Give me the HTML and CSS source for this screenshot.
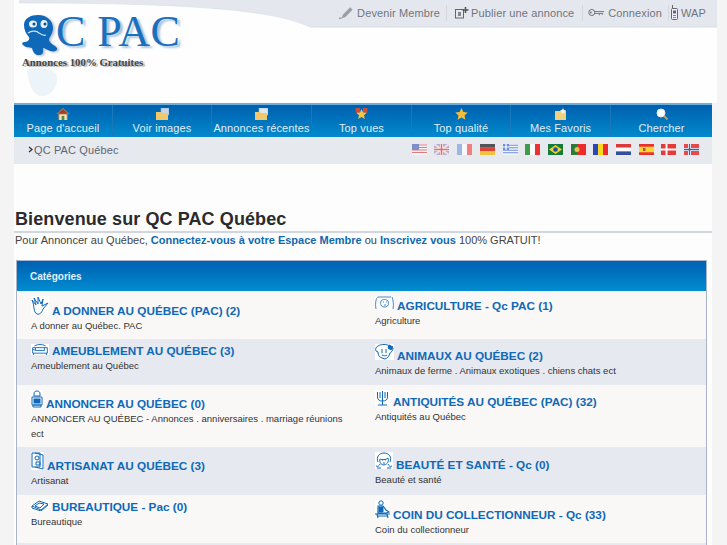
FILE: index.html
```html
<!DOCTYPE html>
<html lang="fr">
<head>
<meta charset="utf-8">
<title>QC PAC Québec</title>
<link rel="stylesheet" href="styles.css">
</head>
<body>
<div class="page">
  <header class="header">
    <svg class="swoosh" width="698" height="28" viewBox="0 0 698 28" aria-hidden="true">
      <path d="M0 0H698V27H291C260 13 200 3 0 3Z" fill="#e4e8ee"/>
      <path d="M291 27H698" stroke="#d4dbe6" fill="none"/>
      <path d="M0 3C200 3 260 13 291 27" stroke="#d4dbe6" fill="none" opacity=".5"/>
    </svg>
    <nav class="toplinks">
      <a class="toplink toplink-first"><svg width="15" height="13" viewBox="0 0 16 13"><path d="M4 9L12 1l2.500 2.500-8 8L3 12.500Z" fill="#9a9ea6"/><path d="M0 12.500h3" stroke="#777"/></svg>Devenir Membre</a>
      <a class="toplink toplink-publish"><svg width="14" height="12" viewBox="0 0 14 12"><rect x=".5" y="2.500" width="8" height="8.500" fill="none" stroke="#666"/><path d="M3 5h3v4H3z" fill="#888"/><path d="M10.500 0v6M7.500 3h6" stroke="#555" stroke-width="1.600"/></svg>Publier une annonce</a>
      <a class="toplink toplink-login"><svg width="17" height="9" viewBox="0 0 18 9"><circle cx="4" cy="4.500" r="3.200" fill="none" stroke="#666"/><path d="M7 3.500h10M7 5.500h9M12 5.500v2M15 5.500v1.500" stroke="#777"/><circle cx="3" cy="4.500" r="1" fill="#777"/></svg>Connexion</a>
      <a class="toplink toplink-last"><svg width="7" height="15" viewBox="0 0 7 15"><rect x=".5" y="3.500" width="6" height="11" rx="1" fill="#eef" stroke="#666"/><rect x="2" y="5.500" width="3" height="3" fill="#666"/><path d="M1.500 3.500V0" stroke="#666"/><path d="M2 10.500h3M2 12.500h3" stroke="#888"/></svg>WAP</a>
    </nav>
    <div class="logo">
      <div class="logo-mark">
        <svg class="mascot" width="36" height="41" viewBox="0 0 36 41">
          <path d="M2 10C2 3 9 0 16 0C25 0 31 6 31 13C31 19 27 22 27 25C28 29 33 30 35 33C36 36 32 37 28 36C25 35 23 33 21 33C21 36 22 39 18 40C13 41 11 37 10 33C7 32 4 33 1 30C-1 28 1 27 3 27C6 26 8 25 7 22C4 19 2 15 2 10Z" fill="#0f69b8"/>
          <ellipse cx="11" cy="9" rx="4" ry="3.500" fill="#e8f2fa"/>
          <ellipse cx="22" cy="9" rx="3.500" ry="4" fill="#e8f2fa"/>
          <circle cx="12" cy="9" r="1.500" fill="#0a4f90"/>
          <circle cx="23" cy="9" r="1.500" fill="#0a4f90"/>
          <path d="M6 18c4-3 9-2 11 0 3 2 5 3 7 2" stroke="#cfe3f3" fill="none" stroke-width="1.200"/>
        </svg>
        <span class="logo-name">C PAC</span>
      </div>
      <div class="logo-tag">Annonces 100% Gratuites</div>
      <svg class="reflection" width="36" height="30" viewBox="0 0 36 30"><path d="M3 2C8 0 14 0 20 1c8 0 14 3 13 12-1 8-7 14-13 15C12 30 5 22 3 2Z" fill="#dbe9f4" opacity=".5"/></svg>
    </div>
  </header>

  <nav class="mainnav">
    <a class="navitem"><svg width="14" height="13" viewBox="0 0 14 13"><path d="M7 0L0 6.500h2V13h10V6.500h2Z" fill="#b8894a"/><path d="M7 1L1.500 6.200h11Z" fill="#a33c2a"/><rect x="3" y="7" width="8" height="6" fill="#f4e6c8"/><rect x="5.500" y="8.500" width="3" height="4.500" fill="#5a8a3a"/></svg><span>Page d'accueil</span></a>
    <a class="navitem"><svg width="13" height="12" viewBox="0 0 13 12"><rect x="5" y="0" width="8" height="7" fill="#c6d6e8" stroke="#8fb0d0" stroke-width=".6"/><path d="M0 4h5l1 1h6v7H0Z" fill="#f1c96a"/></svg><span>Voir images</span></a>
    <a class="navitem"><svg width="13" height="12" viewBox="0 0 13 12"><rect x="4" y="0" width="9" height="7" fill="#dfe7f0" stroke="#9db6cf" stroke-width=".6"/><path d="M0 4h5l1 1h6v7H0Z" fill="#f1c96a"/></svg><span>Annonces récentes</span></a>
    <a class="navitem"><svg width="13" height="13" viewBox="0 0 13 13"><rect x="0" y="0" width="5" height="5" fill="#d24a35"/><rect x="8" y="0" width="5" height="5" fill="#d24a35"/><path d="M6.500 1l1.700 3.800 4 .4-3 2.700.9 4-3.600-2.100-3.600 2.100.9-4-3-2.700 4-.4Z" fill="#f6c247"/></svg><span>Top vues</span></a>
    <a class="navitem"><svg width="13" height="12" viewBox="0 0 13 12"><path d="M6.500 0l1.900 4 4.300.5-3.200 3 .9 4.300-3.900-2.200-3.900 2.200.9-4.300-3.200-3L4.600 4Z" fill="#f4bd3a"/></svg><span>Top qualité</span></a>
    <a class="navitem"><svg width="12" height="12" viewBox="0 0 12 12"><rect x="0" y="3" width="11" height="9" fill="#f0d184"/><path d="M8 0l1 2 2 .3-1.500 1.400.4 2.100L8 4.800l-1.900 1 .4-2.100L5 2.300 7 2Z" fill="#f8f2d8"/></svg><span>Mes Favoris</span></a>
    <a class="navitem"><svg width="12" height="12" viewBox="0 0 12 12"><circle cx="5" cy="5" r="4" fill="#fff" stroke="#e3e7ee"/><path d="M8 8l3.500 3.500" stroke="#c69a4e" stroke-width="2"/></svg><span>Chercher</span></a>
  </nav>

  <div class="crumbbar">
    <div class="crumb"><svg class="crumb-mark" width="5" height="7" viewBox="0 0 5 7"><path d="M1 1l3 2.500L1 6" fill="none" stroke="#333" stroke-width="1.300"/></svg>QC PAC Québec</div>
    <div class="flags">
      <svg class="flag" viewBox="0 0 15 11"><rect width="15" height="11" fill="#f5f5f5"/><path d="M0 1h15M0 3.500h15M0 6h15M0 8.500h15" stroke="#e27a82" stroke-width="1.200"/><rect width="7" height="6" fill="#7f8fca"/></svg>
      <svg class="flag" viewBox="0 0 15 11"><rect width="15" height="11" fill="#a9b3db"/><path d="M0 0L15 11M15 0L0 11" stroke="#f6dfe0" stroke-width="2"/><path d="M7.500 0v11M0 5.500h15" stroke="#f4f4f4" stroke-width="3"/><path d="M7.500 0v11M0 5.500h15" stroke="#ea6a72" stroke-width="1.500"/></svg>
      <svg class="flag" viewBox="0 0 15 11"><rect width="5" height="11" fill="#9db7e4"/><rect x="5" width="5" height="11" fill="#f8f8fb"/><rect x="10" width="5" height="11" fill="#f27f7f"/></svg>
      <svg class="flag" viewBox="0 0 15 11"><rect width="15" height="3.700" fill="#555"/><rect y="3.700" width="15" height="3.700" fill="#d8443a"/><rect y="7.400" width="15" height="3.600" fill="#eec43c"/></svg>
      <svg class="flag" viewBox="0 0 15 11"><rect width="15" height="11" fill="#f2f5fb"/><path d="M0 1.200h15M0 3.700h15M0 6.200h15M0 8.700h15" stroke="#6f8fd8" stroke-width="1.100"/><rect width="6" height="6" fill="#6f8fd8"/><path d="M3 0v6M0 3h6" stroke="#fff" stroke-width="1.200"/></svg>
      <svg class="flag" viewBox="0 0 15 11"><rect width="5" height="11" fill="#3f9b4a"/><rect x="5" width="5" height="11" fill="#fafafa"/><rect x="10" width="5" height="11" fill="#ee3030"/></svg>
      <svg class="flag" viewBox="0 0 15 11"><rect width="15" height="11" fill="#157a3a"/><path d="M7.500 1L14 5.500 7.500 10 1 5.500Z" fill="#f2d230"/><circle cx="7.500" cy="5.500" r="2.300" fill="#2a4d9c"/></svg>
      <svg class="flag" viewBox="0 0 15 11"><rect width="6" height="11" fill="#2d7a3a"/><rect x="6" width="9" height="11" fill="#ee2a2a"/><circle cx="6" cy="5.500" r="2.500" fill="#e6c24a"/></svg>
      <svg class="flag" viewBox="0 0 15 11"><rect width="5" height="11" fill="#2a48b8"/><rect x="5" width="5" height="11" fill="#f7d820"/><rect x="10" width="5" height="11" fill="#ee2a2a"/></svg>
      <svg class="flag" viewBox="0 0 15 11"><rect width="15" height="3.700" fill="#d93a3a"/><rect y="3.700" width="15" height="3.700" fill="#fafafa"/><rect y="7.400" width="15" height="3.600" fill="#344f9e"/></svg>
      <svg class="flag" viewBox="0 0 15 11"><rect width="15" height="11" fill="#ec3030"/><rect y="2.700" width="15" height="5.600" fill="#f6d830"/><rect x="4" y="4" width="2.500" height="3" fill="#b4552a"/></svg>
      <svg class="flag" viewBox="0 0 15 11"><rect width="15" height="11" fill="#e63a3a"/><path d="M5.500 0v11M0 5.500h15" stroke="#fafafa" stroke-width="2"/></svg>
      <svg class="flag" viewBox="0 0 15 11"><rect width="15" height="11" fill="#e84a4a"/><path d="M5.500 0v11M0 5.500h15" stroke="#fafafa" stroke-width="3"/><path d="M5.500 0v11M0 5.500h15" stroke="#3f5fb0" stroke-width="1.300"/></svg>
    </div>
  </div>

  <main class="content">
    <h1 class="title">Bienvenue sur QC PAC Québec</h1>
    <p class="intro">Pour Annoncer au Québec, <a class="intro-link">Connectez-vous à votre Espace Membre</a> ou <a class="intro-link">Inscrivez vous</a> 100% GRATUIT!</p>

    <section class="cats">
      <h2 class="cats-head">Catégories</h2>

      <div class="row row-light">
        <div class="cat">
          <a class="cat-title"><svg class="icon" width="18" height="19" viewBox="0 0 18 19"><path d="M1 4l4 5L3 2l4 6 0-7 3 7 2-5-1 7 6-3-5 6c-1 3-3 6-6 5C2 16 4 11 1 4Z"/></svg>A DONNER AU QUÉBEC (PAC) (2)</a>
          <p class="cat-desc">A donner au Québec. PAC</p>
        </div>
        <div class="cat">
          <a class="cat-title"><svg class="icon" width="19" height="14" viewBox="0 0 19 14"><path d="M1 13C0 7 1 2 3 1M3 1h13M17 1c1 3 2 7 1 12M6 5c1-2 6-2 7 0 1 3 0 6-3 6H9C6 11 5 8 6 5Z" stroke-width=".8"/><path d="M8 6h1M11 6h1M9 9h2" stroke-width=".8"/></svg>AGRICULTURE - Qc PAC (1)</a>
          <p class="cat-desc">Agriculture</p>
        </div>
      </div>

      <div class="row row-dark">
        <div class="cat">
          <a class="cat-title"><svg class="icon" width="18" height="11" viewBox="0 0 18 12"><path d="M3 2c4-2 8-2 12 0M1 4h16v6H1ZM4 4V7h10V4M2 10v2M16 10v2M1 6c2 0 3 1 3 1"/></svg>AMEUBLEMENT AU QUÉBEC (3)</a>
          <p class="cat-desc">Ameublement au Québec</p>
        </div>
        <div class="cat">
          <a class="cat-title"><svg class="icon" width="19" height="16" viewBox="0 0 19 16"><path d="M3 2c3-2 9-2 12 0l3 2c0 3-2 4-3 5-1 3-2 5-5 6l-3-1c-3-1-4-3-4-6L1 7c-1-2 0-4 2-5ZM7 5v4M11 5v4M7 11c2 1 3 1 5 0"/><path d="M14 1l4 2-2 3-3-2Z" fill="#0f69b8"/></svg>ANIMAUX AU QUÉBEC (2)</a>
          <p class="cat-desc">Animaux de ferme . Animaux exotiques . chiens chats ect</p>
        </div>
      </div>

      <div class="row row-light">
        <div class="cat">
          <a class="cat-title"><svg class="icon" width="12" height="18" viewBox="0 0 12 18"><path d="M3 4c0-2 1-3 3-3s3 1 3 3v2H3ZM1 7h10v8H1ZM2 15h8v2H2Z"/><rect x="3" y="9" width="6" height="4" fill="#0f69b8"/></svg>ANNONCER AU QUÉBEC (0)</a>
          <p class="cat-desc">ANNONCER AU QUÉBEC - Annonces . anniversaires . marriage réunions ect</p>
        </div>
        <div class="cat">
          <a class="cat-title"><svg class="icon" width="15" height="16" viewBox="0 0 15 16" stroke-width="1.400"><path d="M7.500 1v12M2.500 2v5c0 3 2 4 5 4s5-1 5-4V2M5 2v6M10 2v6M3 15h9M7.500 13v2"/></svg>ANTIQUITÉS AU QUÉBEC (PAC) (32)</a>
          <p class="cat-desc">Antiquités au Québec</p>
        </div>
      </div>

      <div class="row row-dark">
        <div class="cat">
          <a class="cat-title"><svg class="icon" width="13" height="18" viewBox="0 0 13 18" stroke-width=".8"><path d="M1 1h8v14H1ZM4 1l8 2v14l-8-2"/><circle cx="6" cy="6" r="2"/><path d="M5 10h4v3H5Z"/></svg>ARTISANAT AU QUÉBEC (3)</a>
          <p class="cat-desc">Artisanat</p>
        </div>
        <div class="cat">
          <a class="cat-title"><svg class="icon" width="18" height="17" viewBox="0 0 18 17" stroke-width=".8"><path d="M3 10C1 5 4 1 9 1s8 4 6 9M5 7c2 1 6 1 8-1 1 3 0 6-4 7-3 0-5-3-4-6ZM1 14c2 1 3 0 4-2M17 14c-2 1-3 0-4-2M2 16h4M12 16h4M7 8h1M10 8h1M8 11h2"/></svg>BEAUTÉ ET SANTÉ - Qc (0)</a>
          <p class="cat-desc">Beauté et santé</p>
        </div>
      </div>

      <div class="row row-light">
        <div class="cat">
          <a class="cat-title"><svg class="icon" width="18" height="11" viewBox="0 0 18 11"><path d="M1 6l7-5 9 3-7 6Z"/><path d="M4 6l4-3 5 1-4 4Z"/><path d="M1 6v2l9 3 7-6"/></svg>BUREAUTIQUE - Pac (0)</a>
          <p class="cat-desc">Bureautique</p>
        </div>
        <div class="cat">
          <a class="cat-title"><svg class="icon" width="15" height="19" viewBox="0 0 15 19"><circle cx="6" cy="3" r="2.200"/><path d="M3 6h5l3 4 3 2-3 1H3ZM0 14h15M2 14l1 4M12 14l1 4M3 16h9" stroke-width="1.200"/><path d="M4 7h4v5H4Z" fill="#0f69b8"/></svg>COIN DU COLLECTIONNEUR - Qc (33)</a>
          <p class="cat-desc">Coin du collectionneur</p>
        </div>
      </div>
      <div class="cats-foot"></div>
    </section>
  </main>
</div>
</body>
</html>
```

FILE: styles.css
```css
* { box-sizing: border-box; }
html, body { margin: 0; padding: 0; height: 545px; overflow: hidden; }
body { background: #f4f4f4; font-family: "Liberation Sans", Arial, sans-serif; color: #333; }
.page { width: 698px; margin-left: 14px; background: #fdfdfd; min-height: 545px; }
a { color: inherit; text-decoration: none; }

/* header */
.header { position: relative; height: 103px; width: 703px; background: #fefefe; padding-left: 5px; }
.swoosh { position: absolute; left: 5px; top: 0; }
.toplinks { position: relative; display: flex; justify-content: flex-end; align-items: center; height: 25px; padding-right: 11px; font-size: 11px; color: #70757e; letter-spacing: .12px; }
.toplink { display: flex; align-items: center; gap: 3px; border-left: 1px solid #d4d8de; height: 16px; }
.toplink-first { border-left: 0; padding-right: 6px; }
.toplink-publish { padding: 0 8px; gap: 2px; }
.toplink-login { padding: 0 6px 0 5px; }
.toplink-last { padding-left: 2px; }
.logo { position: relative; margin-left: 3px; margin-top: -10px; width: 170px; }
.logo-mark { display: flex; align-items: flex-start; height: 41px; }
.mascot { flex: none; filter: drop-shadow(2px 1px 1px #b9c6d2); margin-right: -2px; position: relative; z-index: 1; }
.logo-name { font-family: "Liberation Serif", serif; font-size: 44px; line-height: 33px; letter-spacing: .5px; color: #1a70bc; text-shadow: 3px 2px 2px #a9c4de; white-space: nowrap; }
.logo-tag { font-family: "Liberation Serif", serif; font-weight: bold; font-size: 10.800px; line-height: 13px; color: #444; text-shadow: 2px 1px 1px #aaa; white-space: nowrap; }
.reflection { display: block; margin: -1px 0 0 2px; }

/* main nav */
.mainnav { display: grid; grid-template-columns: 99px 99px 100px 100px 99px 100px 101px; height: 34px; border-top: 2px solid #6bb0da; background: linear-gradient(#005fb0, #008acb); }
.navitem { display: flex; flex-direction: column; align-items: center; color: #e2eef8; font-size: 11px; line-height: 14px; padding-top: 3px; border-right: 1px solid #1a78bb; letter-spacing: .12px; }
.navitem:last-child { border-right: 0; }
.navitem svg { height: 12px; flex: none; }
.navitem span { margin-top: 1px; white-space: nowrap; }

/* crumb bar */
.crumbbar { display: flex; justify-content: space-between; align-items: center; height: 27px; background: #e6e9ee; padding: 0 13px 2px 14px; }
.crumb { font-size: 11px; color: #5f6672; letter-spacing: .12px; display: flex; align-items: center; gap: 1px; }
.crumb-mark { flex: none; }
.flags { display: flex; gap: 7.700px; }
.flag { width: 15px; height: 11px; display: block; }

/* content */
.content { padding-top: 44px; }
.title { margin: 0; padding-left: 1px; font-size: 18px; line-height: 22px; font-weight: bold; color: #2b2b2b; height: 25px; border-bottom: 2px solid #d2d6de; letter-spacing: .1px; }
.intro { margin: 0 0 0 1px; font-size: 11px; line-height: 14px; color: #444; }
.intro-link { font-weight: bold; color: #0f69b0; }

/* categories */
.cats { margin: 13px 5px 0 2px; border-left: 1px solid #a9b4c9; border-right: 1px solid #a9b4c9; border-top: 1px solid #a9b7d0; }
.cats-head { margin: 0; height: 30px; padding-left: 13px; font-size: 10px; line-height: 31px; font-weight: bold; color: #e4f0fa; background: linear-gradient(#0060b2, #008ccf); }
.row { display: grid; grid-template-columns: 344px 1fr; }
.row-light { background: #f9f8f7; }
.row-dark { background: #e6e9ef; }
.cat { padding: 5px 14px 5.800px 14px; }
.cat-title { display: flex; align-items: baseline; gap: 3px; font-size: 11.750px; line-height: 14px; font-weight: bold; color: #0f69b8; white-space: nowrap; }
.icon { flex: none; fill: none; stroke: #0f69b8; stroke-width: 1; background: #fff; }
.cat-desc { margin: 0; font-size: 9.500px; line-height: 15.500px; color: #333; }
.cats-foot { height: 8px; background: #e6e9ef; }
```
